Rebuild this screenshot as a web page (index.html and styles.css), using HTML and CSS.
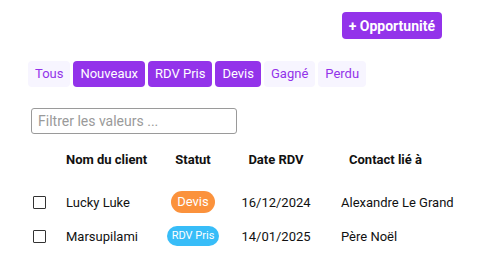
FILE: index.html
```html
<!DOCTYPE html>
<html lang="fr">
<head>
<meta charset="utf-8">
<link rel="stylesheet" href="styles.css">
</head>
<body>
<div class="page">
  <div class="topbar">
    <button class="btn-primary">+ Opportunité</button>
  </div>
  <div class="tabs">
    <span class="tab">Tous</span>
    <span class="tab active">Nouveaux</span>
    <span class="tab active">RDV Pris</span>
    <span class="tab active">Devis</span>
    <span class="tab">Gagné</span>
    <span class="tab">Perdu</span>
  </div>
  <div class="filter">
    <input class="filter-input" type="text" placeholder="Filtrer les valeurs ...">
  </div>
  <div class="table">
    <div class="th"></div>
    <div class="th name">Nom du client</div>
    <div class="th center">Statut</div>
    <div class="th center">Date RDV</div>
    <div class="th contact">Contact lié à</div>

    <div class="td"><span class="check"></span></div>
    <div class="td">Lucky Luke</div>
    <div class="td center"><span class="badge orange">Devis</span></div>
    <div class="td center">16/12/2024</div>
    <div class="td contact-v">Alexandre Le Grand</div>

    <div class="td"><span class="check"></span></div>
    <div class="td">Marsupilami</div>
    <div class="td center"><span class="badge blue">RDV Pris</span></div>
    <div class="td center">14/01/2025</div>
    <div class="td contact-v">Père Noël</div>
  </div>
</div>
</body>
</html>
```
FILE: styles.css
```css
html, body { margin: 0; padding: 0; background: #fff; }
body { font-family: Roboto, "Liberation Sans", sans-serif; color: #111; }
.page { width: 485px; height: 263px; overflow: hidden; }
.topbar { display: flex; justify-content: flex-end; padding: 12px 43px 0 0; }
.btn-primary {
  font-family: Roboto, sans-serif; font-weight: 700; font-size: 14px;
  background: #9333ea; color: #fff; border: none; border-radius: 4px;
  height: 27px; padding: 0 7px; cursor: pointer;
}
.tabs { display: flex; gap: 3px; padding: 22px 0 0 28px; }
.tab {
  font-family: Roboto, sans-serif; font-size: 13px; color: #9333ea;
  background: #f7f5ff; border-radius: 4px; height: 26px; line-height: 26px;
  padding: 0 7px;
}
.tab.active { background: #9333ea; color: #fff; }
.filter { padding: 21px 0 0 31px; }
.filter-input {
  box-sizing: border-box; width: 206px; height: 26px;
  border: 1px solid #9a9a9a; border-radius: 3px;
  font-family: Roboto, sans-serif; font-size: 14px; padding: 0 6px; color: #333;
}
.filter-input::placeholder { color: #9a9a9a; }
.table {
  display: grid; grid-template-columns: 33px 94px 66px 100px auto;
  padding: 18px 0 0 33px; align-items: center;
}
.th { font-weight: 700; font-size: 13px; line-height: 16px; margin-bottom: 17px; white-space: nowrap; }
.td { font-size: 13px; height: 34px; display: flex; align-items: center; white-space: nowrap; }
.center { text-align: center; justify-content: center; }
.contact { padding-left: 23px; }
.contact-v { padding-left: 15px; }
.check {
  display: block; width: 11px; height: 11px; border: 1px solid #333; border-radius: 1px;
}
.badge { color: #fff; border-radius: 999px; display: inline-block; }
.badge.orange { background: #fb923c; font-size: 13px; padding: 0 6px; height: 22px; line-height: 22px; }
.badge.blue { background: #38bdf8; font-size: 11px; padding: 0 5px; height: 20px; line-height: 20px; }
```
